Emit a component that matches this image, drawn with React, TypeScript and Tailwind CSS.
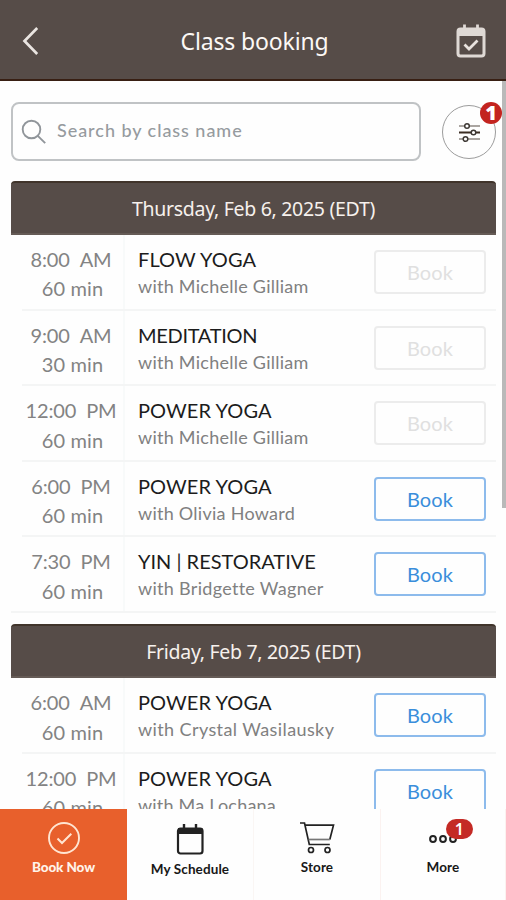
import React from "react";

type Session = {
  time: string;
  half: string;
  duration: string;
  title: string;
  titleFit: string;
  teacher: string;
  teacherFit: string;
  open: boolean;
};

type Day = { label: string; sessions: Session[] };

const days: Day[] = [
  {
    label: "Thursday, Feb 6, 2025 (EDT)",
    sessions: [
      { time: "8:00", half: "AM", duration: "60 min", title: "FLOW YOGA", titleFit: "tracking-[0.1px]", teacher: "with Michelle Gilliam", teacherFit: "tracking-[0.26px]", open: false },
      { time: "9:00", half: "AM", duration: "30 min", title: "MEDITATION", titleFit: "tracking-[-0.3px]", teacher: "with Michelle Gilliam", teacherFit: "tracking-[0.26px]", open: false },
      { time: "12:00", half: "PM", duration: "60 min", title: "POWER YOGA", titleFit: "tracking-[0.1px]", teacher: "with Michelle Gilliam", teacherFit: "tracking-[0.26px]", open: false },
      { time: "6:00", half: "PM", duration: "60 min", title: "POWER YOGA", titleFit: "tracking-[0.1px]", teacher: "with Olivia Howard", teacherFit: "tracking-[0.26px]", open: true },
      { time: "7:30", half: "PM", duration: "60 min", title: "YIN | RESTORATIVE", titleFit: "tracking-[0px]", teacher: "with Bridgette Wagner", teacherFit: "tracking-[0.3px]", open: true },
    ],
  },
  {
    label: "Friday, Feb 7, 2025 (EDT)",
    sessions: [
      { time: "6:00", half: "AM", duration: "60 min", title: "POWER YOGA", titleFit: "tracking-[0.1px]", teacher: "with Crystal Wasilausky", teacherFit: "tracking-[0.4px]", open: true },
      { time: "12:00", half: "PM", duration: "60 min", title: "POWER YOGA", titleFit: "tracking-[0.1px]", teacher: "with Ma Lochana", teacherFit: "tracking-[0.2px]", open: true },
    ],
  },
];

function SessionRow({ s, last }: { s: Session; last: boolean }) {
  return (
    <div className="flex h-[75.6px] shrink-0">
      {!last && <div className="w-[11px] shrink-0" />}
      <div className={`flex flex-1 border-b-2 border-[#f4f5f5] ${last ? "pl-[11px]" : ""}`}>
        <div className="flex w-[103px] shrink-0 flex-col items-center border-r-2 border-[#f8fafa] pt-[10px] text-[20px] leading-[29.4px] text-[#838383]">
          <div className="flex gap-[10px] whitespace-nowrap pr-[3px] tracking-[-0.15px]">
            <span>{s.time}</span>
            <span>{s.half}</span>
          </div>
          <div className="tracking-[0.1px]">{s.duration}</div>
        </div>
        <div className="flex flex-1 flex-col whitespace-nowrap pl-[13px] pt-[10px]">
          <div className={`text-[20px] leading-[29px] text-[#1c1c1c] ${s.titleFit}`}>{s.title}</div>
          <div className={`text-[18px] leading-[24px] text-[#808080] ${s.teacherFit}`}>{s.teacher}</div>
        </div>
        <button
          className={`mr-[10px] mt-[15px] flex h-[44px] w-[112px] items-center justify-center rounded-[4px] text-[20px] tracking-[0.1px] ${
            s.open ? "border-2 border-[#8dbbec] text-[#3a8edb]" : "border-2 border-[#ececec] text-[#e0e0e0]"
          }`}
        >
          Book
        </button>
      </div>
    </div>
  );
}

export default function App() {
  return (
    <div className="flex h-[900px] w-[506px] flex-col overflow-hidden bg-[#fefefe] font-['Lato',sans-serif]">
      <header className="flex h-[81px] shrink-0 items-center justify-between border-b-2 border-[#381f13] bg-[#564c48] pl-[22px] pr-[19px] pt-[3px]">
        <svg width="18" height="30" viewBox="0 0 18 30" fill="none" stroke="#eae5e1" strokeWidth="2.7">
          <path d="M15.2 2 2.5 15 15.2 28" />
        </svg>
        <h1 className="pl-[14px] font-['Noto_Sans',sans-serif] text-[23px] tracking-[-0.15px] text-[#fcf8f5]">Class booking</h1>
        <svg width="32" height="36" viewBox="0 0 32 36" fill="none">
          <path d="M9.500 1.500v6M22.500 1.500v6" stroke="#dfd9d5" strokeWidth="2.800" />
          <rect x="3" y="6" width="26" height="27" rx="2.500" stroke="#dfd9d5" strokeWidth="3" />
          <path d="M2.500 6h27v7h-27z" fill="#dfd9d5" />
          <path d="m9.500 21.500 4.500 4.500 8.500-8.500" stroke="#e8e2de" strokeWidth="2.800" />
        </svg>
      </header>

      <div className="flex min-h-0 flex-1">
        <main className="flex w-[502px] shrink-0 flex-col overflow-hidden pl-[11px] pr-[6px]">
          <div className="flex shrink-0 items-center justify-between pt-[21px]">
            <div className="flex h-[59px] w-[410px] items-center rounded-[8px] border-2 border-[#c0c3c5] pl-[8px]">
              <svg width="26" height="26" viewBox="0 0 26 26" fill="none" stroke="#90959a" strokeWidth="1.9">
                <circle cx="10.500" cy="10.500" r="8.800" />
                <path d="m16.800 16.800 7.400 7.400" />
              </svg>
              <span className="pb-[2px] pl-[10px] text-[18px] font-medium tracking-[0.95px] text-[#969b9f]">Search by class name</span>
            </div>
            <div className="relative mt-px flex size-[54px] items-center justify-center rounded-full border border-[#9c9c9c]">
              <svg width="21" height="21" viewBox="0 0 21 21" fill="none">
                <path d="M0 4h21M0 17h21" stroke="#aaa5a1" strokeWidth="2" />
                <path d="M0 10.500h21" stroke="#3b2d23" strokeWidth="2" />
                <g fill="#fff" stroke="#3d3834" strokeWidth="1.500">
                  <circle cx="8" cy="4" r="2.300" />
                  <circle cx="14.500" cy="10.500" r="2.300" />
                  <circle cx="6.500" cy="17" r="2.300" />
                </g>
              </svg>
              <span className="absolute -right-[7px] -top-[4px] flex size-[22px] items-center justify-center rounded-full bg-[#c3241f] font-['Open_Sans',sans-serif] text-[20px] font-extrabold leading-none text-white">
                1
              </span>
            </div>
          </div>

          {days.map((d, i) => (
            <section key={d.label} className={`flex shrink-0 flex-col ${i === 0 ? "mt-[20px]" : "mt-[11.400px]"}`}>
              <h2 className="flex h-[54px] items-center justify-center rounded-t-[4px] border-y-2 border-b-[#655b56] border-t-[#40342b] bg-[#564c48] pt-px font-['Noto_Sans',sans-serif] text-[19.500px] tracking-[-0.3px] text-[#f6f1ed]">
                {d.label}
              </h2>
              {d.sessions.map((s, n) => (
                <SessionRow key={n} s={s} last={i === 0 && n === d.sessions.length - 1} />
              ))}
            </section>
          ))}
        </main>
        <div className="h-[427px] w-[4px] bg-[#b9b9b9]" />
      </div>

      <nav className="grid h-[91px] shrink-0 grid-cols-[127px_127px_127px_125px] bg-[#fefefe] text-[13.500px] font-bold tracking-[0.1px] text-[#181818]">
        <div className="flex flex-col items-center bg-[#e8602c] pt-[12px] text-[#fff3e9]">
          <svg width="34" height="34" viewBox="0 0 34 34" fill="none" stroke="#ffe5d2">
            <circle cx="17" cy="17" r="15" strokeWidth="1.900" />
            <path d="m10.500 17.500 4.500 4.500 9.300-9.300" strokeWidth="2" />
          </svg>
          <span className="mt-[2px] font-black leading-[20px] tracking-[-0.1px]">Book Now</span>
        </div>
        <div className="flex flex-col items-center border-r border-[#faf6f4] pt-[14px]">
          <svg width="28" height="32" viewBox="0 0 28 32" fill="none" stroke="#222">
            <path d="M8 1v5M20 1v5" strokeWidth="2.400" />
            <rect x="2" y="5.500" width="24.500" height="25" rx="2.500" strokeWidth="2.200" />
            <path d="M2 5h24.500v6H2z" fill="#222" stroke="none" />
          </svg>
          <span className="mt-[4px] leading-[20px]">My Schedule</span>
        </div>
        <div className="flex flex-col items-center border-r border-[#fbf2f0] pt-[12px]">
          <svg width="36" height="34" viewBox="0 0 36 34" fill="none" stroke="#222" strokeWidth="1.700">
            <path d="M1 2h4.500l4.800 21.500h20.500" />
            <path d="M6 4.200H34.500l-3.700 14.300" />
            <path d="M9.500 18.500h21.300" stroke="#777" />
            <circle cx="12" cy="29" r="2.500" />
            <circle cx="28.500" cy="29" r="2.500" />
          </svg>
          <span className="mt-[2px] leading-[20px]">Store</span>
        </div>
        <div className="flex flex-col items-center border-r border-[#fbf2f0] pt-[12px]">
          <div className="relative h-[34px] w-[28px]">
            <svg className="mt-[12px]" width="28" height="12" viewBox="0 0 28 12" fill="none" stroke="#222" strokeWidth="2">
              <circle cx="4" cy="6" r="2.900" />
              <circle cx="14" cy="6" r="2.900" />
              <circle cx="24" cy="6" r="2.900" />
            </svg>
            <span className="absolute -right-[16px] -top-[2px] flex h-[20px] w-[27px] items-center justify-center rounded-[10px] bg-[#c42a25] font-['Noto_Sans',sans-serif] text-[16px] font-semibold leading-none text-white">
              1
            </span>
          </div>
          <span className="mt-[2px] leading-[20px]">More</span>
        </div>
      </nav>
    </div>
  );
}
